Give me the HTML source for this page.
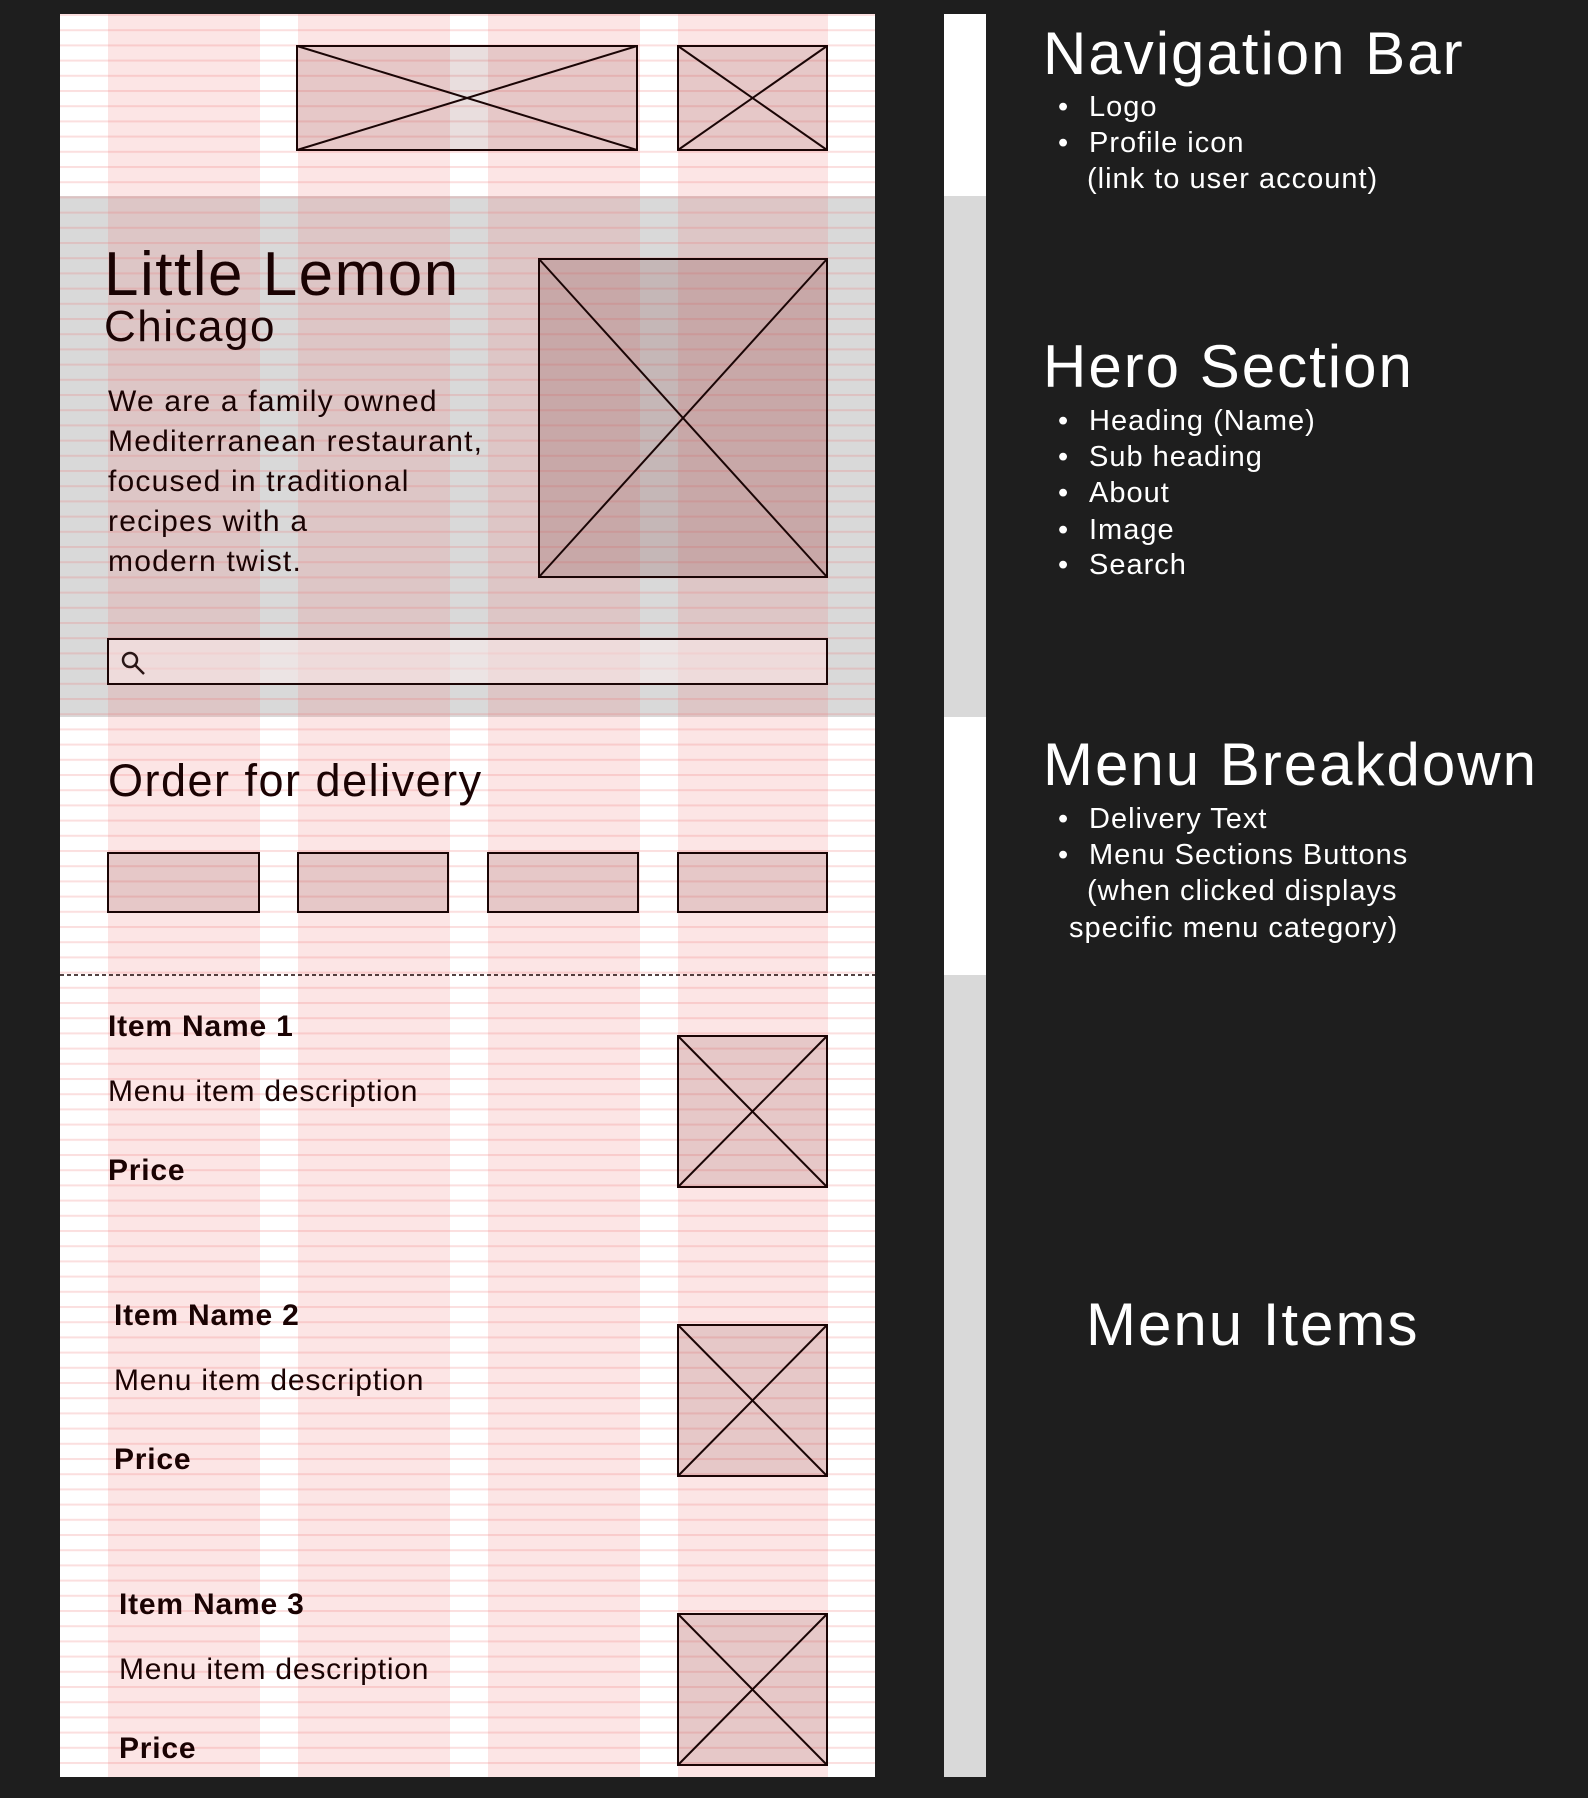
<!DOCTYPE html>
<html><head><meta charset="utf-8"><style>
html,body{margin:0;padding:0;background:#1e1e1e;}
svg{display:block}
</style></head><body>
<svg width="1588" height="1798" viewBox="0 0 1588 1798" xmlns="http://www.w3.org/2000/svg" font-family="'Liberation Sans', sans-serif">
<defs>
<pattern id="hl" x="0" y="14" width="10" height="15.2" patternUnits="userSpaceOnUse">
<rect x="0" y="0" width="10" height="2" fill="rgba(235,110,110,0.22)"/>
</pattern>
</defs>
<rect width="1588" height="1798" fill="#1e1e1e"/>
<rect x="60" y="14" width="815" height="1763" fill="#ffffff"/>
<rect x="60" y="196" width="815" height="521" fill="#d9d9d9"/>
<g fill="rgba(240,110,110,0.18)">
<rect x="108" y="14" width="152" height="1763"/>
<rect x="298" y="14" width="152" height="1763"/>
<rect x="488" y="14" width="152" height="1763"/>
<rect x="678" y="14" width="150" height="1763"/>
</g>
<rect x="60" y="14" width="815" height="1763" fill="url(#hl)"/>
<g stroke="#1a0505" stroke-width="2" fill="rgba(120,50,50,0.16)">
<rect x="297" y="46" width="340" height="104"/>
<line x1="297" y1="46" x2="637" y2="150"/><line x1="297" y1="150" x2="637" y2="46"/>
<rect x="678" y="46" width="149" height="104"/>
<line x1="678" y1="46" x2="827" y2="150"/><line x1="678" y1="150" x2="827" y2="46"/>
<rect x="539" y="259" width="288" height="318" fill="rgba(120,50,50,0.2)"/>
<line x1="539" y1="259" x2="827" y2="577"/><line x1="539" y1="577" x2="827" y2="259"/>
<rect x="108" y="639" width="719" height="45" fill="rgba(255,240,240,0.5)"/>
<rect x="108" y="853" width="151" height="59"/>
<rect x="298" y="853" width="150" height="59"/>
<rect x="488" y="853" width="150" height="59"/>
<rect x="678" y="853" width="149" height="59"/>
<rect x="678" y="1036" width="149" height="151"/>
<line x1="678" y1="1036" x2="827" y2="1187"/><line x1="678" y1="1187" x2="827" y2="1036"/>
<rect x="678" y="1325" width="149" height="151"/>
<line x1="678" y1="1325" x2="827" y2="1476"/><line x1="678" y1="1476" x2="827" y2="1325"/>
<rect x="678" y="1614" width="149" height="151"/>
<line x1="678" y1="1614" x2="827" y2="1765"/><line x1="678" y1="1765" x2="827" y2="1614"/>
</g>
<g stroke="#2a1515" stroke-width="2.5" fill="none">
<circle cx="130" cy="660" r="7"/>
<line x1="135" y1="665" x2="144" y2="674"/>
</g>
<line x1="60" y1="975" x2="875" y2="975" stroke="#1a0505" stroke-width="1.5" stroke-dasharray="4 3"/>
<g fill="#1a0303">
<text x="104" y="295" font-size="62" letter-spacing="1.5">Little Lemon</text>
<text x="104" y="341" font-size="44" letter-spacing="1.5">Chicago</text>
<g font-size="30" letter-spacing="1.2">
<text x="108" y="411">We are a family owned</text>
<text x="108" y="451">Mediterranean restaurant,</text>
<text x="108" y="491">focused in traditional</text>
<text x="108" y="531">recipes with a</text>
<text x="108" y="571">modern twist.</text>
</g>
<text x="108" y="796" font-size="45" letter-spacing="1.5">Order for delivery</text>
<g font-size="30" letter-spacing="0.8">
<text x="108" y="1036" font-weight="bold">Item Name 1</text>
<text x="108" y="1101">Menu item description</text>
<text x="108" y="1180" font-weight="bold">Price</text>
<text x="114" y="1325" font-weight="bold">Item Name 2</text>
<text x="114" y="1390">Menu item description</text>
<text x="114" y="1469" font-weight="bold">Price</text>
<text x="119" y="1614" font-weight="bold">Item Name 3</text>
<text x="119" y="1679">Menu item description</text>
<text x="119" y="1758" font-weight="bold">Price</text>
</g>
</g>
<rect x="944" y="14" width="42" height="182" fill="#ffffff"/>
<rect x="944" y="196" width="42" height="521" fill="#d9d9d9"/>
<rect x="944" y="717" width="42" height="258" fill="#ffffff"/>
<rect x="944" y="975" width="42" height="802" fill="#d9d9d9"/>
<g fill="#ffffff">
<text x="1043" y="74" font-size="60" letter-spacing="2">Navigation Bar</text>
<g font-size="29" letter-spacing="1">
<text x="1058" y="116">•</text><text x="1089" y="116">Logo</text>
<text x="1058" y="152">•</text><text x="1089" y="152">Profile icon</text>
<text x="1087" y="188">(link to user account)</text>
</g>
<text x="1043" y="387" font-size="60" letter-spacing="2">Hero Section</text>
<g font-size="29" letter-spacing="1">
<text x="1058" y="430">•</text><text x="1089" y="430">Heading (Name)</text>
<text x="1058" y="466">•</text><text x="1089" y="466">Sub heading</text>
<text x="1058" y="502">•</text><text x="1089" y="502">About</text>
<text x="1058" y="539">•</text><text x="1089" y="539">Image</text>
<text x="1058" y="574">•</text><text x="1089" y="574">Search</text>
</g>
<text x="1043" y="785" font-size="60" letter-spacing="2">Menu Breakdown</text>
<g font-size="29" letter-spacing="1">
<text x="1058" y="828">•</text><text x="1089" y="828">Delivery Text</text>
<text x="1058" y="864">•</text><text x="1089" y="864">Menu Sections Buttons</text>
<text x="1087" y="900">(when clicked displays</text>
<text x="1069" y="937">specific menu category)</text>
</g>
<text x="1086" y="1345" font-size="60" letter-spacing="2">Menu Items</text>
</g>
</svg>
</body></html>
